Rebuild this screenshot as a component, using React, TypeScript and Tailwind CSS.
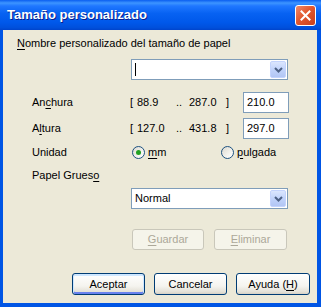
import React from "react";

const U = ({ children }: { children: React.ReactNode }) => (
  <span className="underline decoration-1 underline-offset-[2px]">{children}</span>
);

const Chevron = () => (
  <svg width="9" height="6" viewBox="0 0 9 6">
    <path d="M1 1 L4.5 4.5 L8 1" fill="none" stroke="#4d6185" strokeWidth="2" />
  </svg>
);

const Combo = ({ children }: { children?: React.ReactNode }) => (
  <div className="flex h-[21px] w-[157px] items-center border border-[#7f9db9] bg-white pl-[3px] pr-px">
    <div className="flex flex-1 items-center leading-[13px]">{children}</div>
    <div className="flex h-[17px] w-[16px] items-center justify-center rounded-[2px] border border-[#c3d3fd] bg-[linear-gradient(180deg,#dbe6fe_0%,#c1d3fb_50%,#b2c6f4_100%)]">
      <Chevron />
    </div>
  </div>
);

const Field = ({ value }: { value: string }) => (
  <div className="flex h-[21px] w-[46px] items-center border border-[#7f9db9] bg-white pl-[3px] leading-[13px]">
    {value}
  </div>
);

const Radio = ({ checked }: { checked?: boolean }) => (
  <div className="flex h-[13px] w-[13px] items-center justify-center rounded-full border border-[#1c5180] bg-[linear-gradient(135deg,#dcd9cf_0%,#f4f3ee_60%,#ffffff_100%)]">
    {checked && <div className="h-[5px] w-[5px] rounded-full bg-[#21a121]" />}
  </div>
);

const Btn = ({
  children,
  disabled,
  focused,
  w = "w-[73px]",
}: {
  children: React.ReactNode;
  disabled?: boolean;
  focused?: boolean;
  w?: string;
}) => (
  <div
    className={
      disabled
        ? `flex h-[21px] ${w} items-center justify-center rounded-[3px] border border-[#c9c7ba] bg-[#f5f4ea] text-[#aca899]`
        : `flex h-[22px] ${w} items-center justify-center rounded-[3px] border border-[#003c74] bg-[linear-gradient(180deg,#ffffff_0%,#f5f4ef_60%,#e3e0d6_90%,#d6d0c5_100%)] ${
            focused
              ? "shadow-[inset_0_1px_0_1px_#cee7ff,inset_0_-1px_0_1px_#6982ee]"
              : ""
          }`
    }
  >
    {children}
  </div>
);

export default function App() {
  return (
    <div className="flex h-[307px] w-[321px] flex-col bg-[#0055e5] font-['Liberation_Sans',Arial,sans-serif] text-[11px] text-black">
      <div className="flex h-[30px] items-center bg-[linear-gradient(180deg,#0a5ef0_0%,#3d95ff_10%,#1f77ff_20%,#0762f2_45%,#0058ea_75%,#0050dc_92%,#0044cc_100%)] pl-[7px] pr-[5px]">
        <span className="text-[13px] font-bold text-white [text-shadow:1px_1px_0_#0a1e8c]">
          Tamaño personalizado
        </span>
        <div className="ml-auto flex h-[21px] w-[21px] items-center justify-center rounded-[3px] border border-white bg-[linear-gradient(135deg,#f08a6c_0%,#e2582f_45%,#c93f1c_100%)]">
          <svg width="11" height="11" viewBox="0 0 11 11">
            <path d="M1.5 1.5 L9.5 9.5 M9.5 1.5 L1.5 9.5" stroke="#fff" strokeWidth="2" strokeLinecap="square" />
          </svg>
        </div>
      </div>
      <div className="flex flex-1 pb-[4px] pl-[3px] pr-[4px]">
        <div className="flex flex-1 flex-col bg-[#ece9d8]">
          <div className="ml-[14px] mt-[7px] leading-[13px]">
            <U>N</U>ombre personalizado del tamaño de papel
          </div>
          <div className="ml-[128px] mt-[9px]">
            <Combo>
              <div className="h-[13px] w-px bg-black" />
            </Combo>
          </div>

          <div className="ml-[29px] mt-[12px] flex h-[21px] items-center">
            <span className="w-[98px]">
              An<U>c</U>hura
            </span>
            <span className="w-[7px]">[</span>
            <span className="w-[39px]">88.9</span>
            <span className="w-[13px]">..</span>
            <span className="w-[37px]">287.0</span>
            <span className="w-[17px]">]</span>
            <Field value="210.0" />
          </div>
          <div className="ml-[29px] mt-[5px] flex h-[21px] items-center">
            <span className="w-[98px]">
              A<U>l</U>tura
            </span>
            <span className="w-[7px]">[</span>
            <span className="w-[39px]">127.0</span>
            <span className="w-[13px]">..</span>
            <span className="w-[37px]">431.8</span>
            <span className="w-[17px]">]</span>
            <Field value="297.0" />
          </div>
          <div className="ml-[29px] mt-[6px] flex h-[14px] items-center">
            <span className="w-[100px]">Unidad</span>
            <div className="flex w-[89px] items-center gap-[3px]">
              <Radio checked />
              <span>
                <U>m</U>m
              </span>
            </div>
            <div className="flex items-center gap-[3px]">
              <Radio />
              <span>
                <U>p</U>ulgada
              </span>
            </div>
          </div>
          <div className="ml-[29px] mt-[9px] flex h-[14px] items-center">
            Papel Grues<U>o</U>
          </div>
          <div className="ml-[128px] mt-[6px]">
            <Combo>Normal</Combo>
          </div>

          <div className="ml-[129px] mt-[20px] flex gap-[10px]">
            <Btn disabled w="w-[72px]">
              <U>G</U>uardar
            </Btn>
            <Btn disabled w="w-[73px]">
              <U>E</U>liminar
            </Btn>
          </div>

          <div className="ml-[69px] mt-[23px] flex gap-[9px]">
            <Btn focused>Aceptar</Btn>
            <Btn>Cancelar</Btn>
            <Btn w="w-[74px]">
              Ayuda (<U>H</U>)
            </Btn>
          </div>
        </div>
      </div>
    </div>
  );
}
